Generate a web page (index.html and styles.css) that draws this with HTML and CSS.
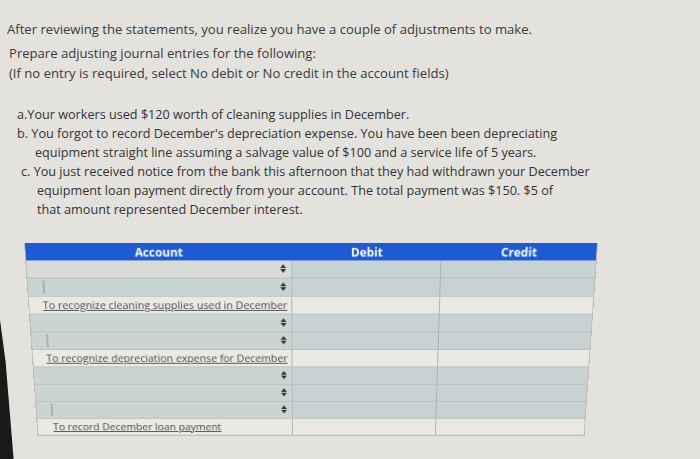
FILE: index.html
```html
<!DOCTYPE html>
<html>
<head>
<meta charset="utf-8">
<link rel="stylesheet" href="styles.css">
</head>
<body>
<div class="page">
  <p class="intro">After reviewing the statements, you realize you have a couple of adjustments to make.</p>
  <p class="instr">Prepare adjusting journal entries for the following:<br>(If no entry is required, select No debit or No credit in the account fields)</p>
  <div class="items">
    <p class="item a">a.Your workers used $120 worth of cleaning supplies in December.</p>
    <p class="item b">b. You forgot to record December's depreciation expense. You have been been depreciating<br><span class="cont">equipment straight line assuming a salvage value of $100 and a service life of 5 years.</span></p>
    <p class="item c">c. You just received notice from the bank this afternoon that they had withdrawn your December<br><span class="cont">equipment loan payment directly from your account. The total payment was $150. $5 of</span><br><span class="cont">that amount represented December interest.</span></p>
  </div>
  <div class="journal">
    <div class="row head"><div class="acc">Account</div><div class="num">Debit</div><div class="num">Credit</div></div>
    <div class="row sel first"><div class="acc"><span class="arr"></span></div><div class="num"></div><div class="num"></div></div>
    <div class="row sel"><div class="acc indent"><span class="arr"></span></div><div class="num"></div><div class="num"></div></div>
    <div class="row memo"><div class="acc"><span class="m">To recognize cleaning supplies used in December</span></div><div class="num"></div><div class="num"></div></div>
    <div class="row sel"><div class="acc"><span class="arr"></span></div><div class="num"></div><div class="num"></div></div>
    <div class="row sel"><div class="acc indent"><span class="arr"></span></div><div class="num"></div><div class="num"></div></div>
    <div class="row memo"><div class="acc"><span class="m">To recognize depreciation expense for December</span></div><div class="num"></div><div class="num"></div></div>
    <div class="row sel"><div class="acc"><span class="arr"></span></div><div class="num"></div><div class="num"></div></div>
    <div class="row sel"><div class="acc"><span class="arr"></span></div><div class="num"></div><div class="num"></div></div>
    <div class="row sel"><div class="acc indent"><span class="arr"></span></div><div class="num"></div><div class="num"></div></div>
    <div class="row memo"><div class="acc"><span class="m m3">To record December loan payment</span></div><div class="num"></div><div class="num"></div></div>
  </div>
</div>
<div class="edge"></div>
</body>
</html>
```

FILE: styles.css
```css
html, body {
  margin: 0;
  padding: 0;
  width: 700px;
  height: 459px;
  overflow: hidden;
  background: #e4e2dd;
}
.page {
  font-family: "Open Sans", "Noto Sans", sans-serif;
  color: #3a3a3a;
  font-size: 13.1px;
  padding: 20px 0 0 7px;
}
p { margin: 0; }
.intro { line-height: 18px; }
.instr { margin: 5px 0 0 2px; line-height: 20px; }
.items { margin: 22px 0 0 10px; font-size: 12.65px; line-height: 19px; color: #333; }
.item.c { margin-left: 4px; }
.item .cont { padding-left: 18px; }
.item.c .cont { padding-left: 16px; }
.journal {
  margin: 24px 0 0 17px;
  width: 572px;
  border-left: 1px solid #b9bcb8;
  border-right: 1px solid #b9bcb8;
  border-bottom: 1px solid #b9bcb8;
  transform-origin: 50% 0;
  transform: perspective(1000px) rotateX(-13.7deg);
}
.row {
  display: grid;
  grid-template-columns: 267px 150px 1fr;
  height: 18px;
  border-bottom: 1px solid #b8bfbd;
}
.row > div { border-right: 1px solid #aab3b1; position: relative; }
.row > div:last-child { border-right: none; }
.row.head {
  background: #1c5ad6;
  height: 18px;
  border-bottom: none;
  color: #fff;
  font-weight: 700;
  font-size: 11.8px;
  line-height: 18px;
}
.row.head > div { text-align: center; border-right: none; }
.row.sel { background: #c6d3d2; }
.row.sel.first .acc { background: #d8dbd6; }
.row.sel .acc { background: #cad5d3; border-right: 1px solid #b2bbb9; }
.acc.indent::before {
  content: "";
  position: absolute;
  left: 15px;
  top: 2px;
  bottom: 2px;
  width: 2px;
  background: #a8b1af;
}
.arr {
  position: absolute;
  right: 8px;
  top: 4px;
  width: 0;
  height: 10px;
}
.arr::before, .arr::after {
  content: "";
  position: absolute;
  left: -3px;
  border-left: 3px solid transparent;
  border-right: 3px solid transparent;
}
.arr::before { top: 0; border-bottom: 4px solid #333; }
.arr::after { top: 5px; border-top: 4px solid #333; }
.row.memo { background: #eae9e4; }
.m {
  display: block;
  text-align: right;
  padding-right: 4px;
  font-size: 10.85px;
  line-height: 18px;
  color: #4a4a4a;
  text-decoration: underline;
  white-space: nowrap;
}
.m3 { text-align: left; padding-left: 16px; }
.edge {
  position: absolute;
  left: 0;
  top: 320px;
  width: 16px;
  height: 139px;
  background: #1a1a1a;
  clip-path: polygon(0 0, 35% 30%, 85% 100%, 0 100%);
}
```
